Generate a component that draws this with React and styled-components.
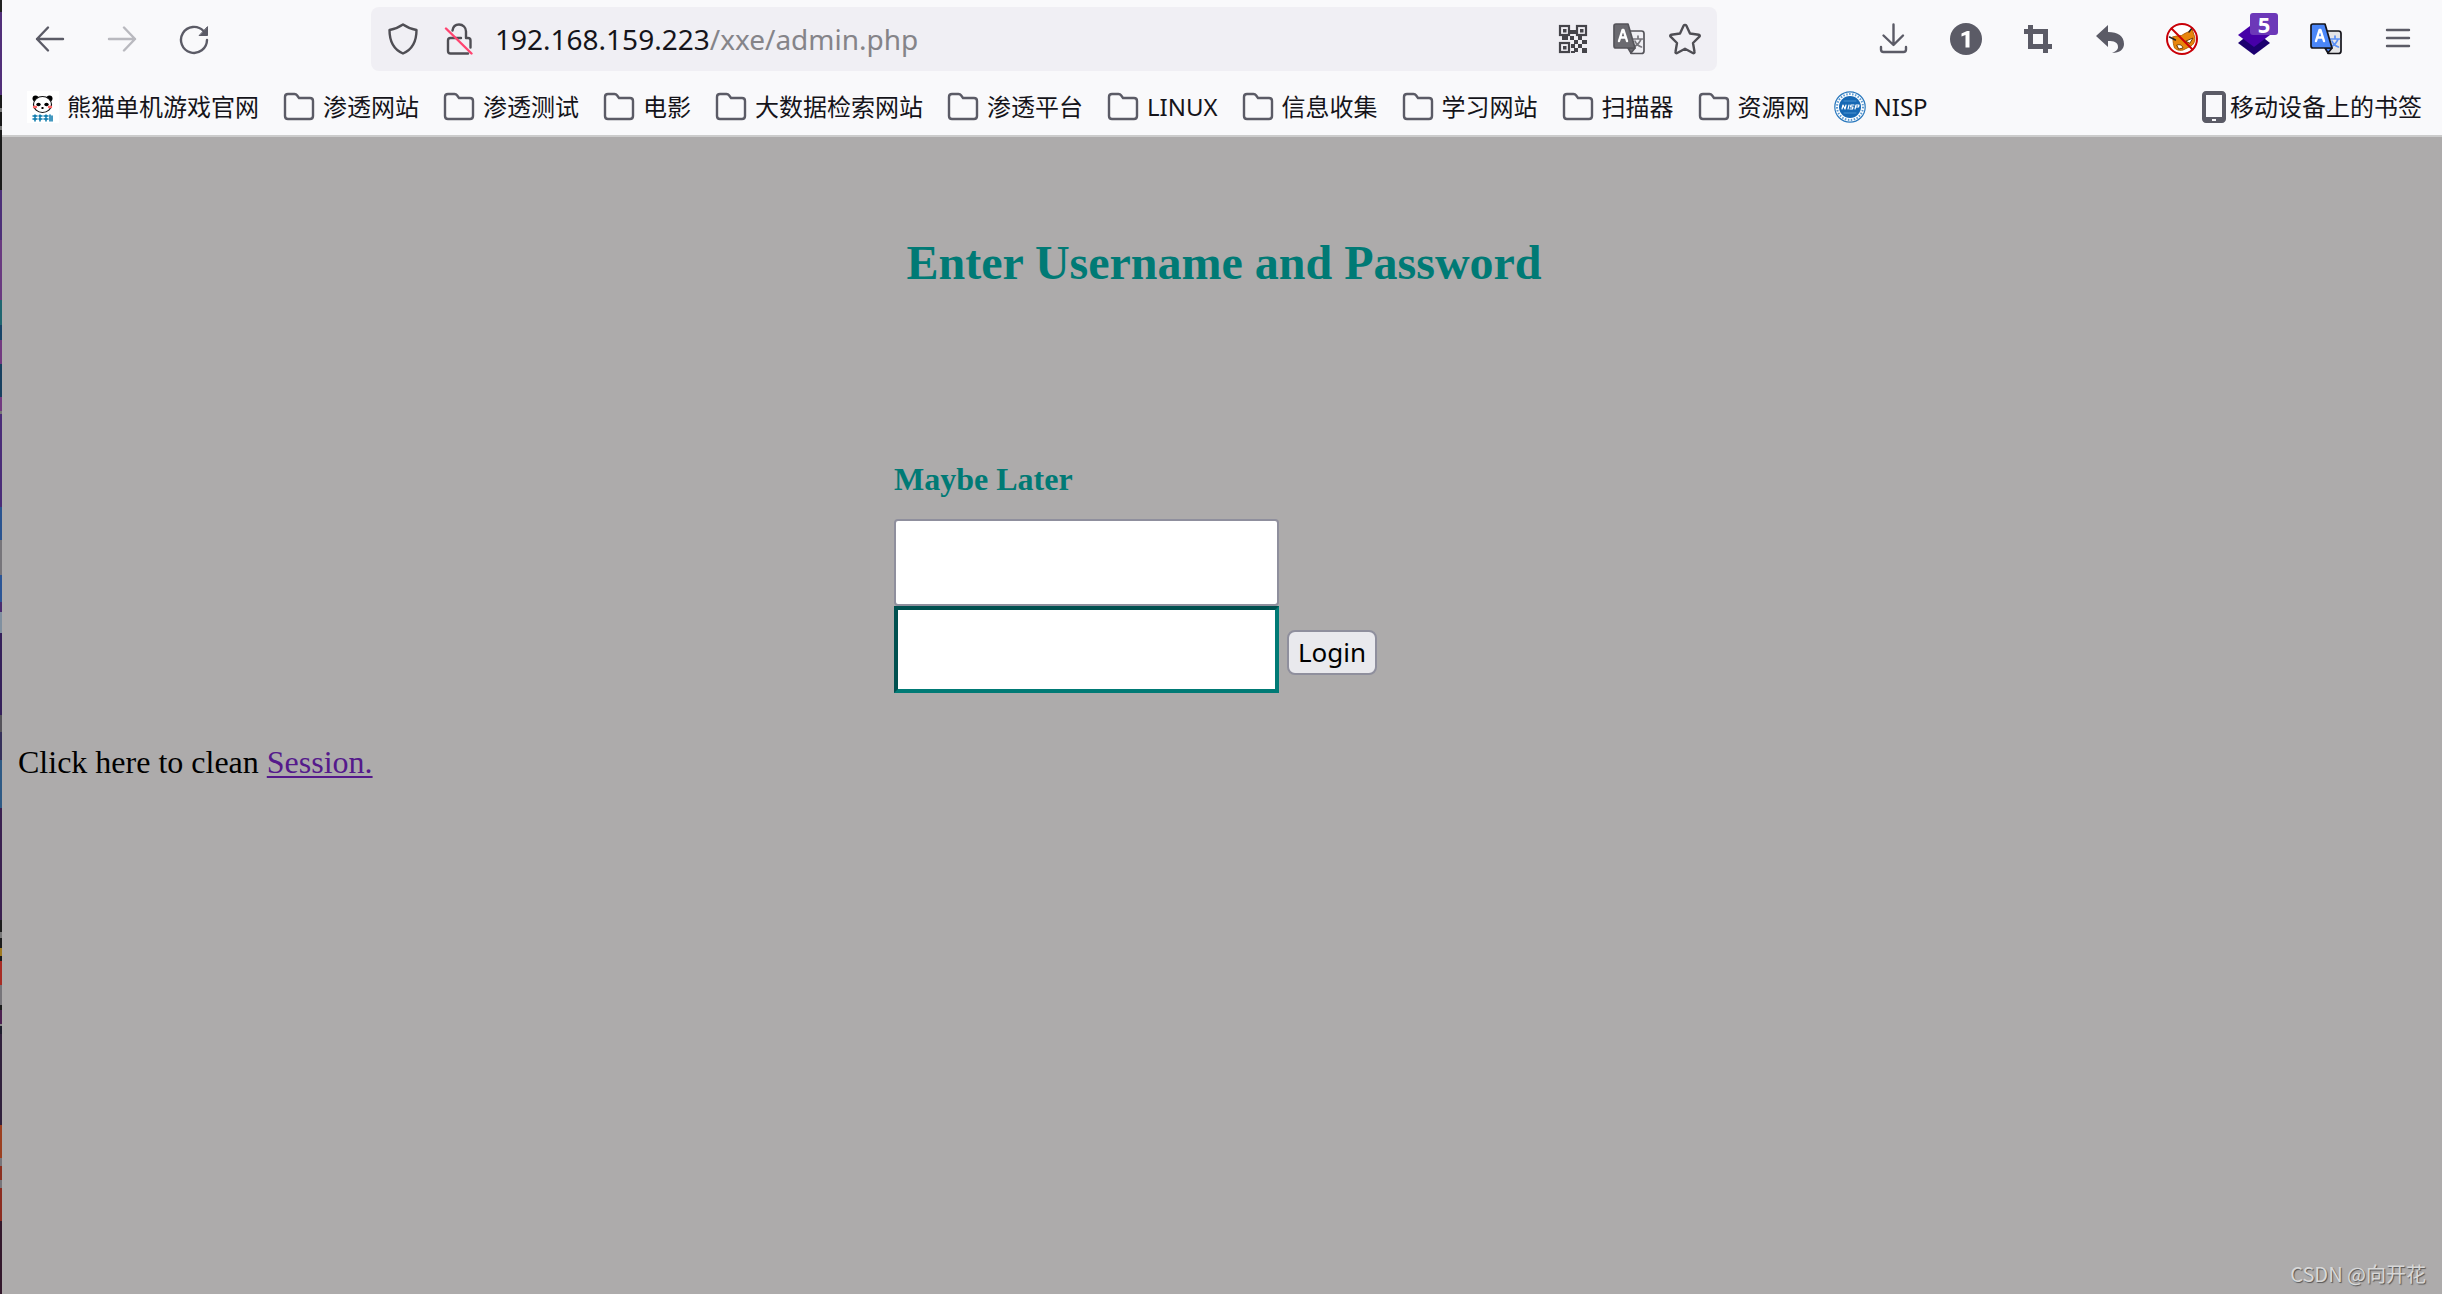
import React from "react";
import styled, { createGlobalStyle } from "styled-components";

const GlobalStyle = createGlobalStyle`
  *, *::before, *::after { box-sizing: border-box; }
  html, body { margin: 0; height: 100%; }
  #root { height: 100%; }
  body { background: #adabab; }
`;

const uiFont = `"Noto Sans", "Noto Sans CJK SC", sans-serif`;
const pageFont = `"Liberation Serif", "Noto Sans CJK SC", serif`;

const Window = styled.div`
  min-height: 100%;
  display: grid;
  grid-template-columns: 2px 1fr;
`;

const DesktopEdge = styled.div`
  background: linear-gradient(
    #222 0 12px, #52307a 12px 95px, #1a1a1a 95px 108px, #777 108px 112px,
    #1a1a1a 112px 126px, #777 126px 130px, #1a1a1a 130px 190px, #4c2f78 190px 240px,
    #693a80 240px 300px, #1f6670 300px 325px, #174468 325px 340px, #723a80 340px 364px,
    #174060 364px 397px, #723a80 397px 411px, #777 411px 414px, #4a2c78 414px 507px,
    #2a5490 507px 540px, #77757a 540px 575px, #2b5596 575px 602px, #4a2c70 602px 612px,
    #8090a0 612px 633px, #35205a 633px 715px, #55535a 715px 732px, #35305a 732px 760px,
    #2e5a85 760px 808px, #3a2050 808px 920px, #1c1c1c 920px 932px, #777 932px 938px,
    #1c1c1c 938px 948px, #a07a20 948px 956px, #1c1c1c 956px 961px, #a82c24 961px 985px,
    #77757a 985px 1005px, #1c1c1c 1005px 1010px, #4c2050 1010px 1024px, #888 1024px 1026px,
    #1c1c2c 1026px 1034px, #30203c 1034px 1125px, #9c4020 1125px 1158px, #77757a 1158px 1166px,
    #8c3020 1166px 1180px, #77757a 1180px 1188px, #8c2c20 1188px 1221px, #33182c 1221px
  );
`;

const Browser = styled.div`
  display: flex;
  flex-direction: column;
  min-width: 0;
`;

const Chrome = styled.header`
  background: #f9f9fb;
  border-bottom: 2px solid #cccccc;
  font-family: ${uiFont};
  color: #15141a;
`;

const NavBar = styled.div`
  display: grid;
  grid-template-columns: 297px minmax(600px, 1346px) 1fr;
  align-items: center;
  column-gap: 40px;
  padding: 7px 28px 8px 32px;
`;

const ButtonGroup = styled.div`
  display: flex;
  gap: ${(p) => (p.$tight ? 24 : 40)}px;
  justify-content: ${(p) => (p.$end ? "flex-end" : "flex-start")};
`;

const IconButton = styled.button`
  position: relative;
  display: block;
  flex: none;
  width: 32px;
  height: 32px;
  padding: 0;
  border: 0;
  background: none;
  color: #5b5b66;
  opacity: ${(p) => (p.disabled ? 0.4 : 1)};
  svg { display: block; }
`;

const Count = styled.span`
  position: absolute;
  left: 12px;
  top: -10px;
  width: 28px;
  height: 22px;
  border-radius: 3px;
  background: #6c38b8;
  color: #fff;
  font: 700 22px/22px ${uiFont};
  text-align: center;
`;

const AddressBar = styled.div`
  display: flex;
  align-items: center;
  gap: 20px;
  height: 64px;
  padding: 0 16px;
  border-radius: 8px;
  background: #f0eff4;
`;

const Url = styled.div`
  flex: 1;
  font-size: 28px;
  line-height: 40px;
  white-space: nowrap;
  span { color: #858489; }
`;

const Bookmarks = styled.nav`
  display: flex;
  align-items: center;
  gap: 24px;
  height: 56px;
  padding: 0 20px 0 25px;
`;

const Bookmark = styled.a`
  display: flex;
  align-items: center;
  gap: ${(p) => (p.$last ? 4 : 8)}px;
  margin-left: ${(p) => (p.$last ? "auto" : 0)};
  color: inherit;
  font-size: 24px;
  line-height: 32px;
  text-decoration: none;
  white-space: nowrap;
  svg { display: block; flex: none; }
`;

const Page = styled.main`
  flex: 1;
  display: flex;
  flex-direction: column;
  padding: 98px 12px 8px 16px;
  font-family: ${pageFont};
  font-size: 32px;
  line-height: 36px;
  color: #000;
`;

const Title = styled.h1`
  margin: 0;
  color: #007a75;
  font-size: 48px;
  line-height: 56px;
  text-align: center;
`;

const LoginForm = styled.form`
  width: 660px;
  max-width: 100%;
  margin: 170px auto 0;
`;

const FormTitle = styled.h2`
  margin: 0 0 22px;
  color: #007a75;
  font-size: 32px;
  line-height: 36px;
`;

const Row = styled.div`
  display: flex;
  align-items: baseline;
  gap: 8px;
`;

const Field = styled.input`
  display: block;
  width: 385px;
  height: 87px;
  padding: 2px 8px;
  background: #fff;
  border: ${(p) => (p.$heavy ? "4px solid" : "2px solid #8f8f9d")};
  ${(p) => p.$heavy && "border-color: #00504f #007a75 #007a75 #00504f;"}
  border-radius: ${(p) => (p.$heavy ? 0 : 4)}px;
  font: 32px ${uiFont};
  outline: none;
`;

const Submit = styled.button`
  height: 45px;
  padding: 0 9px;
  border: 2px solid #8f8f9d;
  border-radius: 8px;
  background: #e9e9ed;
  color: #000;
  font: 26px/36px ${uiFont};
`;

const CleanNote = styled.p`
  margin: 51px 0 0;
  a { color: #551a8b; text-decoration-thickness: 2px; text-underline-offset: 3px; }
`;

const Watermark = styled.footer`
  margin-top: auto;
  padding-right: 4px;
  color: #d8d8d8;
  font: 20px/24px "Noto Sans CJK SC", sans-serif;
  text-align: right;
  text-shadow: 1px 1px 1px #555;
`;

const Icon = ({ children, w = 32, ...rest }) => (
  <svg width={w} height="32" viewBox={`0 0 ${w} 32`} fill="none" stroke="currentColor"
    strokeWidth="2.4" strokeLinecap="round" strokeLinejoin="round" aria-hidden="true" {...rest}>
    {children}
  </svg>
);

const BackIcon = () => <Icon><path d="M29 16H3M14 4.500L3 16l11 11.500" /></Icon>;
const ForwardIcon = () => <Icon><path d="M3 16h26M18 4.500L29 16 18 27.500" /></Icon>;
const ReloadIcon = () => (
  <Icon>
    <path d="M29 17A13 13 0 1 1 25.500 8" />
    <path d="M29.500 4v8.500h-8z" fill="currentColor" strokeWidth="1" />
  </Icon>
);
const ShieldIcon = () => (
  <Icon color="#4f4e54"><path d="M16 1.500C12.500 4 7.500 6 2.500 7c0 10 3 19 13.500 23.500C26.500 26 29.500 17 29.500 7 24.500 6 19.500 4 16 1.500z" /></Icon>
);
const LockIcon = () => (
  <Icon color="#4f4e54">
    <path d="M9.500 7.500C10 4 12.500 1.500 16 1.500c4 0 7 3 7 7V15h2c1.500 0 2.500 1 2.500 2.500v7M18 15H7.500C6 15 5 16 5 17.500V28c0 1.500 1 2.500 2.500 2.500H25" />
    <path d="M3 5.500l25.500 25" stroke="#ff4470" />
  </Icon>
);
const QrIcon = () => (
  <Icon color="#45444a" stroke="none" fill="currentColor">
    {[[2, 2], [19, 2], [2, 19]].map(([x, y]) => (
      <g key={`${x}-${y}`}>
        <rect x={x + 1} y={y + 1} width="9" height="9" fill="none" stroke="currentColor" strokeWidth="2.200" strokeLinejoin="miter" />
        <rect x={x + 4} y={y + 4} width="3.500" height="3.500" />
      </g>
    ))}
    <path d="M13 7h6v4h-6zM5 13h6v4H5zM13 13h4v4h-4zM21 13h4v4h-4zM17 17h4v4h-4zM25 17h5v4h-5zM14 21h4v4h-4zM21 21h4v4h-4zM17 25h4v4h-4zM25 25h5v5h-5zM14 28h4v2h-4z" />
  </Icon>
);
const TranslateIcon = ({ front, back, glyph, edge }) => (
  <Icon strokeWidth="1.700" stroke={edge}>
    <path d="M17 8h11.500C30 8 31 9 31 10.500V28c0 1.500-1 2.500-2.500 2.500H18z" fill={back} />
    <path d="M20.500 16h9M25 13v3M28 16c-1 4-4 6-7 8M22 18c1 3 3.500 5 6.500 6" stroke={glyph} />
    <path d="M15 25h7l-4 5z" fill={front} />
    <path d="M3 1h12l7 24H3c-1.500 0-2-1-2-2V3c0-1.200.8-2 2-2z" fill={front} />
    <path d="M6 18L9.500 7h1L14 18M7.500 14.500h5" stroke="#fff" strokeWidth="2.400" />
  </Icon>
);
const StarIcon = () => (
  <Icon color="#4f4e54"><path d="M14.700 2.600L11 10.500l-8.700 1.200c-1 .2-1.400 1.300-.7 2L8 20l-1.500 8.800c-.2 1 .8 1.700 1.700 1.200L16 25.800l7.800 4.200c.9.500 1.900-.2 1.700-1.200L24 20l6.400-6.300c.7-.7.3-1.800-.7-2L21 10.500l-3.700-7.900c-.5-1-2.100-1-2.600 0z" /></Icon>
);
const DownloadIcon = () => <Icon><path d="M15.500 1.500v20M5.500 12.500L15.500 22l9.500-9.500M3 24v2.500C3 28 4 29 5.500 29h20c1.500 0 2.500-1 2.500-2.500V24" /></Icon>;
const CircleOneIcon = () => (
  <Icon stroke="none">
    <circle cx="16" cy="16" r="16" fill="currentColor" />
    <path d="M11.500 10.500L17 8h2.500v16.500h-4V12l-4 1.500z" fill="#fff" />
  </Icon>
);
const CropIcon = () => <Icon strokeWidth="5" strokeLinecap="butt" strokeLinejoin="miter"><path d="M2 8.500h21.500V30M8.500 2v21.500H30" /></Icon>;
const UndoIcon = () => <Icon stroke="none"><path d="M2 13L14 2v7c10 0 16 4 16 12 0 5-4 9-12 9 5-2 6-4 6-6 0-5-4-6-10-6v6z" fill="currentColor" /></Icon>;
const FoxIcon = () => (
  <Icon strokeWidth="1">
    <circle cx="16" cy="16" r="15" fill="#fff" stroke="none" />
    <path d="M7 14c4-2 8 0 11-3 3-2 6-2 8-5l2 6c2 5 0 9-3 11l-8 4c-5 1-9-1-9-4-1-3-1-6-1-9z" fill="#e8860c" stroke="#b86206" />
    <path d="M11 22c3-1 5 0 6 3l-4 1zM20 18l7-3-3 5z" fill="#fff" stroke="#754008" />
    <path d="M3.500 14l6 3M23 9l3-4" stroke="#222" strokeWidth="1.400" />
    <circle cx="16" cy="16" r="15" stroke="#c90008" strokeWidth="2" />
    <path d="M5.500 5.500l21 21" stroke="#c90008" strokeWidth="2" />
  </Icon>
);
const LayersIcon = () => (
  <Icon stroke="none">
    <path d="M0 20l5-4h22l5 4-16 12z" fill="#1c0070" />
    <path d="M0 12L16 0l16 12-16 12z" fill="#4600a8" />
  </Icon>
);
const MenuIcon = () => <Icon><path d="M5 7h22M5 15h22M5 23h22" /></Icon>;
const FolderIcon = () => <Icon color="#5b5b66"><path d="M5 3h6.500c1 0 2 .5 2.500 1.200l2 2.800h11c1.700 0 3 1.300 3 3v15c0 1.700-1.300 3-3 3H5c-1.700 0-3-1.300-3-3V6c0-1.700 1.300-3 3-3z" /></Icon>;
const PandaIcon = () => (
  <Icon stroke="none">
    <path d="M0 0h32v32H0z" fill="#fff" />
    <circle cx="8.500" cy="7.500" r="3" fill="#000" /><circle cx="22.500" cy="7.500" r="3" fill="#000" />
    <ellipse cx="15.500" cy="13.500" rx="9" ry="8" fill="#fff" stroke="#111" strokeWidth="1.200" />
    <ellipse cx="11.500" cy="13.500" rx="2.200" ry="1.800" fill="#000" /><ellipse cx="19.500" cy="13.500" rx="2.200" ry="1.800" fill="#000" />
    <path d="M14.500 16h2v2h-2z" fill="#000" />
    <path d="M7 16h2M22 16h2" stroke="#f66" />
    <path d="M6 25h4M6 28h4M8 24v6M12 25h3M12 28h3M13 24v6M17 25h4M17 28h4M19 24v6M23 24v6M25 25v5" stroke="#0878ac" strokeWidth="1.500" />
  </Icon>
);
const NispIcon = () => (
  <Icon stroke="none">
    <circle cx="16" cy="16" r="15.200" fill="#fff" stroke="#2a78bd" strokeWidth="1.200" />
    <circle cx="16" cy="16" r="13" stroke="#5a98d0" strokeWidth="2" strokeDasharray="1.500 1.500" strokeLinecap="butt" />
    <circle cx="16" cy="16" r="11" fill="#1668b4" />
    <path d="M10 10h12M10 22h12" stroke="#4b92d0" strokeWidth="1" />
    <path d="M8 18l1-4 2 4 1-4M14 18l1-4M20 14h-3l-.5 2h2.500l-.5 2H16M21 18l1-4h3l-.5 2H22" stroke="#fff" strokeWidth="1.200" />
  </Icon>
);
const PhoneIcon = () => (
  <Icon w={24} stroke="none" color="#5b5b66">
    <path fillRule="evenodd" d="M4 0h16c2.200 0 4 1.800 4 4v24c0 2.200-1.800 4-4 4H4c-2.200 0-4-1.800-4-4V4c0-2.200 1.800-4 4-4zm0 4v22h16V4zm6 24v2h4v-2z" fill="currentColor" />
  </Icon>
);

const folders = ["渗透网站", "渗透测试", "电影", "大数据检索网站", "渗透平台", "LINUX", "信息收集", "学习网站", "扫描器", "资源网"];

export default function App() {
  return (
    <>
      <GlobalStyle />
      <Window>
        <DesktopEdge />
        <Browser>
          <Chrome>
            <NavBar>
              <ButtonGroup>
                <IconButton aria-label="Back"><BackIcon /></IconButton>
                <IconButton aria-label="Forward" disabled><ForwardIcon /></IconButton>
                <IconButton aria-label="Reload"><ReloadIcon /></IconButton>
              </ButtonGroup>
              <AddressBar>
                <ButtonGroup $tight>
                  <IconButton aria-label="Tracking protection"><ShieldIcon /></IconButton>
                  <IconButton aria-label="Connection not secure"><LockIcon /></IconButton>
                </ButtonGroup>
                <Url>192.168.159.223<span>/xxe/admin.php</span></Url>
                <ButtonGroup $tight>
                  <IconButton aria-label="QR code"><QrIcon /></IconButton>
                  <IconButton aria-label="Translate page"><TranslateIcon front="#6b6a70" back="#f0eff4" glyph="#77767c" edge="#55545a" /></IconButton>
                  <IconButton aria-label="Bookmark this page"><StarIcon /></IconButton>
                </ButtonGroup>
              </AddressBar>
              <ButtonGroup $end>
                <IconButton aria-label="Downloads"><DownloadIcon /></IconButton>
                <IconButton aria-label="Containers"><CircleOneIcon /></IconButton>
                <IconButton aria-label="Screenshot"><CropIcon /></IconButton>
                <IconButton aria-label="Undo"><UndoIcon /></IconButton>
                <IconButton aria-label="Proxy"><FoxIcon /></IconButton>
                <IconButton aria-label="Layers"><LayersIcon /><Count>5</Count></IconButton>
                <IconButton aria-label="Translate"><TranslateIcon front="#4a86f7" back="#e4e4e6" glyph="#5b90f5" edge="#15141a" /></IconButton>
                <IconButton aria-label="Menu"><MenuIcon /></IconButton>
              </ButtonGroup>
            </NavBar>
            <Bookmarks aria-label="Bookmarks">
              <Bookmark href="#"><PandaIcon />熊猫单机游戏官网</Bookmark>
              {folders.map((name) => (
                <Bookmark href="#" key={name}><FolderIcon />{name}</Bookmark>
              ))}
              <Bookmark href="#"><NispIcon />NISP</Bookmark>
              <Bookmark href="#" $last><PhoneIcon />移动设备上的书签</Bookmark>
            </Bookmarks>
          </Chrome>
          <Page>
            <Title>Enter Username and Password</Title>
            <LoginForm onSubmit={(e) => e.preventDefault()}>
              <FormTitle>Maybe Later</FormTitle>
              <Field type="text" aria-label="Username" />
              <Row>
                <Field $heavy type="password" aria-label="Password" />
                <Submit type="submit">Login</Submit>
              </Row>
            </LoginForm>
            <CleanNote>Click here to clean <a href="#">Session.</a></CleanNote>
            <Watermark>CSDN @向开花</Watermark>
          </Page>
        </Browser>
      </Window>
    </>
  );
}
